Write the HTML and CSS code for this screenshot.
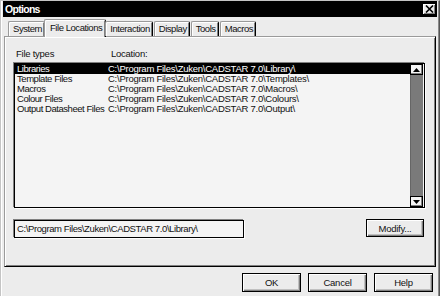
FILE: index.html
```html
<!DOCTYPE html>
<html lang="en">
  <head>
    <meta charset="UTF-8" />
    <title>Options</title>
    <link rel="stylesheet" href="styles.css">
  </head>
  <body>
    <div class="window">
      <!-- Title bar -->
      <header class="titlebar">
        <span class="title">Options</span>
        <button class="close-btn" aria-label="Close">
          <svg width="9" height="8" viewBox="0 0 9 8">
            <path d="M1 0.5 L8 7.5 M8 0.5 L1 7.5" stroke="#000" stroke-width="1.6" fill="none" />
          </svg>
        </button>
      </header>

      <div class="content">
        <!-- Tabs -->
        <ul class="tabs">
          <li class="tab">System</li>
          <li class="tab active">File Locations</li>
          <li class="tab">Interaction</li>
          <li class="tab">Display</li>
          <li class="tab">Tools</li>
          <li class="tab">Macros</li>
        </ul>

        <!-- Tab page -->
        <section class="panel">
          <div class="list-head">
            <span>File types</span>
            <span>Location:</span>
          </div>

          <div class="listbox">
            <ul class="rows">
              <li class="row selected"><span>Libraries</span><span>C:\Program Files\Zuken\CADSTAR 7.0\Library\</span></li>
              <li class="row"><span>Template Files</span><span>C:\Program Files\Zuken\CADSTAR 7.0\Templates\</span></li>
              <li class="row"><span>Macros</span><span>C:\Program Files\Zuken\CADSTAR 7.0\Macros\</span></li>
              <li class="row"><span>Colour Files</span><span>C:\Program Files\Zuken\CADSTAR 7.0\Colours\</span></li>
              <li class="row"><span>Output Datasheet Files</span><span>C:\Program Files\Zuken\CADSTAR 7.0\Output\</span></li>
            </ul>
            <div class="scrollbar">
              <div class="arrow">
                <svg width="7" height="4" viewBox="0 0 7 4"><path d="M3.5 0 L7 4 L0 4 Z" fill="#000" /></svg>
              </div>
              <div class="track"></div>
              <div class="arrow">
                <svg width="7" height="4" viewBox="0 0 7 4"><path d="M0 0 L7 0 L3.5 4 Z" fill="#000" /></svg>
              </div>
            </div>
          </div>

          <div class="path-row">
            <div class="path-field">C:\Program Files\Zuken\CADSTAR 7.0\Library\</div>
            <button class="btn modify-btn">Modify...</button>
          </div>
        </section>

        <!-- Dialog buttons -->
        <footer class="footer">
          <button class="btn">OK</button>
          <button class="btn">Cancel</button>
          <button class="btn">Help</button>
        </footer>
      </div>
    </div>
  </body>
</html>
```

FILE: styles.css
```css
body {
  margin: 0;
  padding: 0;
  font-family: "Liberation Sans", Arial, sans-serif;
  font-size: 9.5px;
  letter-spacing: -0.25px;
  color: #111;
  background: #ececec;
}
.window {
  width: 440px;
  height: 296px;
  box-sizing: border-box;
  background: #ececec;
  border-left: 1px solid #c4c4c4;
  border-right: 1px solid #555;
  border-top: 1px solid #c4c4c4;
  padding: 0 2px;
  box-shadow: inset 1px 0 #fff, inset -1px 0 #8a8a8a;
}
/* Title bar */
.titlebar {
  display: flex;
  justify-content: space-between;
  align-items: center;
  height: 16px;
  background: #000;
  color: #fff;
  padding: 0 1px 0 2px;
}
.title {
  font-weight: bold;
  font-size: 10.5px;
  letter-spacing: -0.7px;
}
.close-btn {
  width: 14px;
  height: 12px;
  padding: 0;
  margin: 0;
  border: 1px solid #000;
  background: #ececec;
  box-shadow: inset 1px 1px #fff, inset -1px -1px #808080;
  display: flex;
  justify-content: center;
  align-items: center;
}
.content {
  padding: 2px 1px 0 1px;
}
/* Tabs */
.tabs {
  display: flex;
  align-items: flex-end;
  list-style: none;
  margin: 0 0 0 4px;
  padding: 0;
  height: 17px;
  position: relative;
  z-index: 1;
  font-size: 9.5px;
  letter-spacing: -0.45px;
}
.tab {
  height: 14px;
  line-height: 13px;
  padding: 0 2px 0 4px;
  margin-right: 1px;
  border: 1px solid #9a9a9a;
  border-bottom: none;
  border-right-color: #000;
  border-radius: 2px 2px 0 0;
  box-shadow: inset 1px 1px #fff, inset -1px 0 #808080;
  background: #ececec;
}
.tab.active {
  height: 17px;
  line-height: 15px;
  padding: 0 3px 0 5px;
  margin: 0 -1px -1px -2px;
}
/* Tab page */
.panel {
  height: 231px;
  box-sizing: border-box;
  border: 1px solid;
  border-color: #9a9a9a #000 #000 #9a9a9a;
  box-shadow: inset 1px 1px #fff, inset -1px -1px #808080;
  padding: 12px 10px 0 9px;
}
.list-head {
  display: grid;
  grid-template-columns: 95px 1fr;
  padding-left: 2px;
  line-height: 10px;
  margin-bottom: 4px;
}
.listbox {
  display: flex;
  height: 145px;
  box-sizing: border-box;
  border: 1px solid #000;
  background: #f4f4f4;
  box-shadow: -1px -1px #808080, 1px 1px #fff;
}
.rows {
  flex: 1;
  list-style: none;
  margin: 0;
  padding: 0;
}
.row {
  display: grid;
  grid-template-columns: 91px 1fr;
  padding-left: 2px;
  height: 10px;
  line-height: 10px;
  white-space: nowrap;
}
.row span:first-child {
  letter-spacing: -0.45px;
}
.row.selected {
  background: #000;
  color: #fff;
}
.scrollbar {
  width: 13px;
  display: flex;
  flex-direction: column;
  padding: 0 1px 0 0;
}
.arrow {
  height: 11px;
  box-sizing: border-box;
  border: 1px solid #000;
  background: #f4f4f4;
  box-shadow: inset -1px -1px #808080;
  display: flex;
  justify-content: center;
  align-items: center;
}
.track {
  flex: 1;
  background: #7a7a7a;
  border-left: 1px solid #666;
}
.path-row {
  display: flex;
  justify-content: space-between;
  align-items: flex-start;
  margin-top: 11px;
  padding-right: 1px;
}
.path-field {
  width: 230px;
  height: 18px;
  box-sizing: border-box;
  margin-top: 1px;
  border: 1px solid #000;
  box-shadow: -1px -1px #808080, 1px 1px #fff;
  background: #f4f4f4;
  padding-left: 2px;
  line-height: 16px;
  letter-spacing: -0.4px;
  white-space: nowrap;
}
/* Buttons */
.btn {
  font-family: "Liberation Sans", Arial, sans-serif;
  font-size: 9.5px;
  letter-spacing: -0.25px;
  color: #111;
  height: 19px;
  width: 59px;
  padding: 0;
  border: 1px solid #000;
  background: #ececec;
  box-shadow: inset 1px 1px #fff, inset -1px -1px #808080, inset -2px -2px #c0c0c0;
}
.modify-btn {
  width: 58px;
  height: 18px;
}
.footer {
  display: flex;
  justify-content: flex-end;
  gap: 7px;
  margin-top: 6px;
  padding-right: 3px;
}
```
